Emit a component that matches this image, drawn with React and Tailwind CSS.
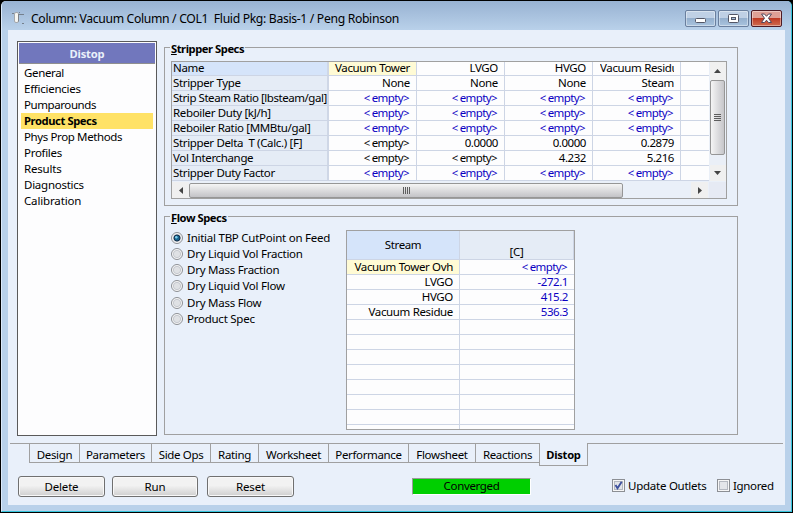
import React from "react";

const menu = [
  ["General", "tracking-[-0.35px]"],
  ["Efficiencies", "tracking-[-0.25px]"],
  ["Pumparounds", "tracking-[-0.42px]"],
  ["Product Specs", "bg-[#ffe266] text-[11.2px] font-bold tracking-[-0.4px]"],
  ["Phys Prop Methods", "tracking-[-0.38px]"],
  ["Profiles", "tracking-[-0.3px]"],
  ["Results", "tracking-[-0.2px]"],
  ["Diagnostics", "tracking-[-0.25px]"],
  ["Calibration", "tracking-[-0.15px]"],
];

const E = "<empty>";
const specs = [
  { name: "Name", cells: ["Vacuum Tower", "LVGO", "HVGO", "Vacuum Residue"] },
  { name: "Stripper Type", cells: ["None", "None", "None", "Steam"] },
  { name: "Strip Steam Ratio [lbsteam/gal]", cells: [E, E, E, E], input: true },
  { name: "Reboiler Duty [kJ/h]", cells: [E, E, E, E], input: true },
  { name: "Reboiler Ratio [MMBtu/gal]", cells: [E, E, E, E], input: true },
  { name: "Stripper Delta  T (Calc.) [F]", cells: [E, "0.0000", "0.0000", "0.2879"] },
  { name: "Vol Interchange", cells: [E, E, "4.232", "5.216"] },
  { name: "Stripper Duty Factor", cells: [E, E, E, E], input: true },
];

const flowOptions = [
  ["Initial TBP CutPoint on Feed", "h-4"],
  ["Dry Liquid Vol Fraction", "h-4"],
  ["Dry Mass Fraction", "h-4"],
  ["Dry Liquid Vol Flow", "h-4"],
  ["Dry Mass Flow", "h-4 mt-px"],
  ["Product Spec", "h-4"],
];

const streams = [
  ["Vacuum Tower Ovh", E],
  ["LVGO", "-272.1"],
  ["HVGO", "415.2"],
  ["Vacuum Residue", "536.3"],
  ["", ""], ["", ""], ["", ""], ["", ""], ["", ""], ["", ""], ["", ""],
];

const tabs = [
  ["Design", "w-[50px]"],
  ["Parameters", "w-[72px]"],
  ["Side Ops", "w-[59px]"],
  ["Rating", "w-[48px]"],
  ["Worksheet", "w-[70px]"],
  ["Performance", "w-[80px]"],
  ["Flowsheet", "w-[67px]"],
  ["Reactions", "w-[64px]"],
];

function Value({ text }) {
  if (text === E) return <span className="mr-px tracking-[-0.6px]"><span className="mr-0.5">&lt;</span>empty&gt;</span>;
  if (/^[-\d.]+$/.test(text)) return <span className="tracking-[-0.45px]">{text}</span>;
  return text;
}

function WindowButton({ close, children }) {
  return (
    <div className={`flex h-[17px] w-[31px] items-center justify-center rounded-[2px] border ${close ? "border-[#4d1a24] bg-linear-to-b from-[#dfa096] from-45% via-[#bf3a24] via-50% to-[#cf6a4e]" : "border-[#6a7f9e] bg-linear-to-b from-[#bfd0e5] from-45% via-[#95b0ce] via-50% to-[#a9c3de]"} shadow-[inset_0_0_0_1px_rgba(255,255,255,0.4)]`}>
      {children}
    </div>
  );
}

function TitleBar() {
  return (
    <div className="flex h-[29px] bg-linear-to-b from-[#98b2d2] to-[#b9d1ea] pr-[9px] pl-[10px]">
      <svg className="mt-[10px] h-[14px] w-[14px]" viewBox="0 0 14 14" fill="none">
        <path d="M0 2.500H2M7 3.500H12M10 12.500H12M7 1.500H8" stroke="#75808d" />
        <rect x="2.500" y="1.500" width="4" height="10" rx="1.500" fill="#f7f7f3" stroke="#a3a7ab" />
        <path d="M6.500 3V10.500" stroke="#7d8288" />
      </svg>
      <div className="mt-[8px] ml-[5px] flex-1 text-[12.2px] leading-[20px] tracking-[-0.33px] whitespace-pre">Column: Vacuum Column / COL1  Fluid Pkg: Basis-1 / Peng Robinson</div>
      <div className="mt-[9px] flex gap-[2px]">
        <WindowButton>
          <svg width="11" height="5" className="mt-[4px]" viewBox="0 0 11 5"><rect x=".5" y=".5" width="10" height="4" rx="1" fill="#fff" stroke="#535666" /></svg>
        </WindowButton>
        <WindowButton>
          <svg width="11" height="9" viewBox="0 0 11 9"><rect x=".5" y=".5" width="10" height="8" rx="1" fill="#fff" stroke="#535666" /><rect x="3.500" y="3.500" width="4" height="2" fill="#a5bdd8" stroke="#535666" /></svg>
        </WindowButton>
        <WindowButton close>
          <svg width="13" height="11" viewBox="0 0 13 11"><path d="M1.500 1H4.500L6.500 3.300 8.500 1H11.500L8.500 5.200 11.500 9.500H8.500L6.500 7.200 4.500 9.500H1.500L4.500 5.200Z" fill="#fff" stroke="#53465a" /></svg>
        </WindowButton>
      </div>
    </div>
  );
}

function Sidebar() {
  return (
    <div className="mt-[11px] h-[395px] w-[140px] border border-[#5a5a5a] bg-[#fdfdfe] p-px">
      <div className="h-[21px] border-b border-[#8f8f8f] bg-[#7177bd] text-center text-[11.2px] leading-[22px] font-bold tracking-[-0.2px] text-[#e9f0fa]">Distop</div>
      <div className="px-[2px] pt-px">
        {menu.map(([m, cls]) => (
          <div key={m} className={`h-4 pl-[3px] leading-[15px] whitespace-nowrap ${cls}`}>{m}</div>
        ))}
      </div>
    </div>
  );
}

function VerticalScroll() {
  return (
    <div className="flex w-[17px] flex-col items-center bg-[#eaeff7]">
      <div className="flex h-[18px] w-[16px] items-center justify-center bg-[#f0f0f0]">
        <svg width="7" height="4" viewBox="0 0 7 4"><path d="M3.500 0 7 4H0Z" fill="#444" /></svg>
      </div>
      <div className="flex h-[75px] w-[15px] flex-col items-center justify-center gap-px rounded-[2px] border border-[#969696] bg-linear-to-r from-[#f5f5f5] to-[#c6c6ca]">
        {[0, 1, 2, 3].map((i) => <div key={i} className="h-px w-[7px] bg-[#5e5e5e]" />)}
      </div>
      <div className="mt-auto flex h-[16px] w-[16px] items-center justify-center bg-[#f0f0f0]">
        <svg width="7" height="4" viewBox="0 0 7 4"><path d="M3.500 4 7 0H0Z" fill="#444" /></svg>
      </div>
    </div>
  );
}

function HorizontalScroll() {
  return (
    <div className="flex h-[17px] items-center bg-[#eaf0f9] pt-px">
      <div className="flex h-[16px] w-[17px] items-center justify-center bg-[#f0f0f0]">
        <svg width="4" height="7" viewBox="0 0 4 7"><path d="M0 3.500 4 0V7Z" fill="#444" /></svg>
      </div>
      <div className="flex h-[15px] w-[434px] items-center justify-center gap-px rounded-[2px] border border-[#969696] bg-linear-to-b from-[#f5f5f5] to-[#c3c3c7]">
        {[0, 1, 2, 3].map((i) => <div key={i} className="h-[7px] w-px bg-[#5e5e5e]" />)}
      </div>
      <div className="ml-auto flex h-[16px] w-[17px] items-center justify-center bg-[#f0f0f0]">
        <svg width="4" height="7" viewBox="0 0 4 7"><path d="M4 3.500 0 0V7Z" fill="#444" /></svg>
      </div>
      <div className="ml-px h-[16px] w-[17px] bg-[#e6eaf4]" />
    </div>
  );
}

function StripperSpecs() {
  return (
    <fieldset className="h-[166px] border border-[#a0a0a0] pl-[6px]">
      <legend className="-ml-px h-[15px] px-px text-[11.2px] font-bold leading-[17px] tracking-[-0.45px]"><span className="underline underline-offset-1">S</span>tripper Specs</legend>
      <div className="mt-[6px] h-[138px] w-[556px] border border-[#a0a0a0]">
        <div className="flex h-[119px]">
          <div className="w-[537px]">
            {specs.map((r, i) => (
              <div key={r.name} className={`flex border-b border-[#cdd5e5] ${i === 0 ? "h-[14px] leading-[11px]" : "h-[15px] leading-[13px]"}`}>
                <div className={`w-[157px] border-r-2 border-[#cfd7e6] pl-px whitespace-pre ${i === 0 ? "bg-[#d5e4fa]" : "bg-[#e5ecf6]"} ${i === 2 ? "tracking-[-0.45px]" : ""}`}>{r.name}</div>
                {r.cells.map((c, j) => (
                  <div key={j} className={`flex w-[88px] border-r border-[#cdd5e5] pr-[6px] pl-[6px] whitespace-nowrap ${i === 0 && j === 0 ? "bg-[#fffbd5]" : "bg-[#fdfdfe]"} ${r.input ? "text-[#0b00c2]" : ""}`}>
                    <div className={`ml-auto ${i === 0 && j === 3 ? "w-[74px] overflow-x-clip" : ""}`}><Value text={c} /></div>
                  </div>
                ))}
                <div className="flex-1 bg-[#fdfdfe]" />
              </div>
            ))}
          </div>
          <VerticalScroll />
        </div>
        <HorizontalScroll />
      </div>
    </fieldset>
  );
}

function Radio({ checked }) {
  return (
    <svg className="mt-[2px] h-[12px] w-[12px] shrink-0" viewBox="0 0 12 12">
      <circle cx="6" cy="6" r="5.500" fill="#f9f9f9" stroke="#8c8f94" />
      <circle cx="6" cy="6" r="3.700" fill="#dfe1e4" stroke="#bcc0c6" strokeWidth=".8" />
      {checked && <circle cx="6" cy="6" r="3" fill="#17658f" stroke="#12304d" />}
      {checked && <circle cx="5.300" cy="5.200" r="1.200" fill="#7fd0ee" />}
    </svg>
  );
}

function FlowSpecs() {
  return (
    <fieldset className="mt-[3px] h-[226px] border border-[#a0a0a0] pl-[6px]">
      <legend className="-ml-px h-[15px] px-px text-[11.2px] font-bold leading-[17px] tracking-[-0.45px]"><span className="underline underline-offset-1">F</span>low Specs</legend>
      <div className="flex">
        <div className="mt-[6px] w-[175px]">
          {flowOptions.map(([t, cls], i) => (
            <div key={t} className={`flex gap-[4px] leading-[15px] tracking-[-0.25px] whitespace-nowrap ${cls}`}><Radio checked={i === 0} />{t}</div>
          ))}
        </div>
        <div className="mt-[6px] h-[200px] w-[229px] overflow-hidden border border-[#a0a0a0] bg-[#fdfdfe]">
          <div className="flex h-[29px] border-b border-[#cdd5e5] text-center">
            <div className="w-[113px] border-r border-[#cdd5e5] bg-[#d5e4fa] leading-[27px]">Stream</div>
            <div className="flex-1 border-r border-[#cdd5e5] bg-[#e5ecf6] pt-[13px] leading-[15px]">[C]</div>
          </div>
          {streams.map(([a, b], i) => (
            <div key={i} className="flex h-[15px] border-b border-[#cdd5e5] text-right leading-[13px] whitespace-nowrap">
              <div className={`w-[113px] border-r border-[#cdd5e5] pr-[6px] ${i === 0 ? "bg-[#fffbd5]" : ""}`}>{a}</div>
              <div className="flex-1 pr-[6px] text-[#0b00c2]"><Value text={b} /></div>
            </div>
          ))}
          <div className="flex h-[4px]"><div className="w-[113px] border-r border-[#cdd5e5]" /></div>
        </div>
      </div>
    </fieldset>
  );
}

function Tabs() {
  return (
    <div className="flex h-[23px] pl-[2px]">
      <div className="h-px w-[19px] bg-[#a0a0a0]" />
      {tabs.map(([t, w]) => (
        <div key={t} className={`h-[20px] border-y border-l border-[#a0a0a0] text-center leading-[22px] ${w}`}>{t}</div>
      ))}
      <div className="w-[49px] border-x border-b border-[#a0a0a0] text-center text-[11.2px] leading-[24px] font-bold tracking-[-0.3px]">Distop</div>
      <div className="h-px w-[195px] bg-[#a0a0a0]" />
    </div>
  );
}

function Button({ className, children }) {
  return (
    <div className={`h-[21px] rounded-[3px] border border-[#707070] bg-linear-to-b from-[#f2f2f2] from-45% to-[#cfcfcf] text-center leading-[20px] tracking-[-0.2px] shadow-[inset_0_0_0_1px_#f8f8f8] ${className}`}>{children}</div>
  );
}

function Check({ checked }) {
  return (
    <svg className="h-[13px] w-[13px]" viewBox="0 0 13 13">
      <rect x=".5" y=".5" width="12" height="12" fill="#f6f6f6" stroke="#8c8f94" />
      <rect x="2.500" y="2.500" width="8" height="8" fill="#e3e5e9" stroke="#b4b8c0" />
      {checked && <path d="M3.500 6 5.500 9.300 9.700 2.800" fill="none" stroke="#3f529e" strokeWidth="1.900" />}
    </svg>
  );
}

function Footer() {
  return (
    <div className="flex pt-[10px] pl-[10px]">
      <Button className="w-[87px]">Delete</Button>
      <Button className="ml-[7px] w-[86px]">Run</Button>
      <Button className="ml-[9px] w-[87px]">Reset</Button>
      <div className="mt-[2px] ml-[118px] h-[17px] w-[119px] border border-t-[#9a9a9a] border-r-white border-b-white border-l-[#9a9a9a] bg-[#00cf00] text-center leading-[13px]">Converged</div>
      <div className="mt-[3px] ml-[81px] flex leading-[14px]"><Check checked /><span className="ml-[3px] w-[89px] tracking-[-0.25px]">Update Outlets</span><Check /><span className="ml-[3px]">Ignored</span></div>
    </div>
  );
}

export default function App() {
  return (
    <div className="h-[513px] w-[793px] overflow-hidden bg-black font-['Noto_Sans','Open_Sans',sans-serif] text-[11.5px] tracking-[-0.35px] text-black">
      <div className="h-full rounded-t-[6px] border border-black">
        <div className="h-full overflow-hidden rounded-t-[5px] border-r border-b border-l border-r-[#35c4dc] border-b-[#35c4dc] border-l-[#dceafa] bg-[#b9d1ea]">
          <TitleBar />
          <div className="mr-[6px] ml-[6px] h-[475px] bg-[#e9f0fa]">
            <div className="flex h-[413px] pl-[9px]">
              <Sidebar />
              <div className="mt-[10px] ml-[7px] w-[574px]">
                <StripperSpecs />
                <FlowSpecs />
              </div>
            </div>
            <Tabs />
            <Footer />
          </div>
        </div>
      </div>
    </div>
  );
}
